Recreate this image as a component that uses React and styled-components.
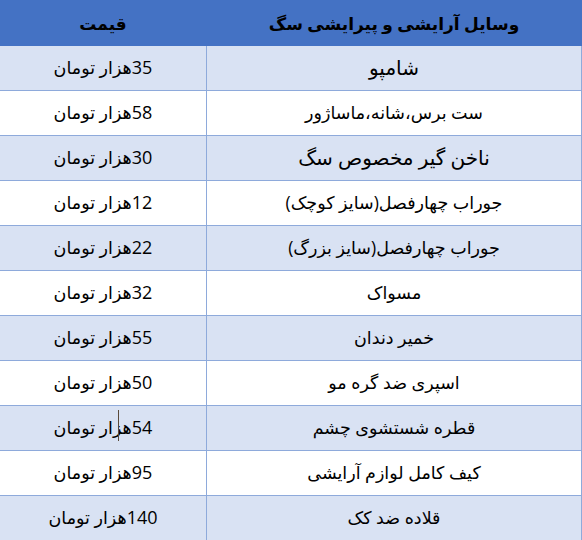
import styled, { createGlobalStyle } from "styled-components";

const items = [
  { name: "شامپو", price: "35", large: true },
  { name: "ست برس،شانه،ماساژور", price: "58" },
  { name: "ناخن گیر مخصوص سگ", price: "30", large: true },
  { name: "جوراب چهارفصل(سایز کوچک)", price: "12" },
  { name: "جوراب چهارفصل(سایز بزرگ)", price: "22" },
  { name: "مسواک", price: "32" },
  { name: "خمیر دندان", price: "55" },
  { name: "اسپری ضد گره مو", price: "50" },
  { name: "قطره شستشوی چشم", price: "54", caret: true },
  { name: "کیف کامل لوازم آرایشی", price: "95" },
  { name: "قلاده ضد کک", price: "140" },
];

const GlobalStyle = createGlobalStyle`
  body {
    margin: 0;
    background: #ffffff;
    font-family: "Open Sans", "DejaVu Sans", sans-serif;
  }
`;

const Table = styled.div`
  direction: rtl;
  width: 582px;
  display: grid;
  grid-template-columns: 376px 206px;
  color: #000000;
`;

const HeadCell = styled.div`
  height: 46px;
  background: #4472c4;
  display: flex;
  align-items: center;
  justify-content: center;
  font-weight: bold;
  font-size: 17px;
`;

const Cell = styled.div`
  position: relative;
  height: 44px;
  display: flex;
  align-items: center;
  justify-content: center;
  background: ${({ $shaded }) => ($shaded ? "#d9e2f3" : "#ffffff")};
  border-bottom: 1px solid #8eaadb;
  border-right: ${({ $edge }) => ($edge ? "1px solid #8eaadb" : "none")};
  border-left: ${({ $edge }) => ($edge ? "1px solid #8eaadb" : "none")};
  font-size: 17.5px;
`;

const Name = styled.span`
  font-size: ${({ $large }) => ($large ? "20px" : "17.5px")};
  margin-bottom: 2px;
`;

const Price = styled.span`
  margin-bottom: 2px;
`;

const Num = styled.span`
  font-family: "Open Sans", sans-serif;
  font-size: 18px;
`;

const Caret = styled.span`
  position: absolute;
  left: 118px;
  top: 4px;
  width: 1px;
  height: 31px;
  background: #5a4a3a;
`;

export default function App() {
  return (
    <>
      <GlobalStyle />
      <Table>
        <HeadCell>وسایل آرایشی و پیرایشی سگ</HeadCell>
        <HeadCell>قیمت</HeadCell>
        {items.map((it, i) => [
          <Cell key={`n${i}`} $shaded={i % 2 === 0} $edge>
            <Name $large={it.large}>{it.name}</Name>
          </Cell>,
          <Cell key={`p${i}`} $shaded={i % 2 === 0}>
            <Price>
              <Num>{it.price}</Num>هزار تومان
            </Price>
            {it.caret && <Caret />}
          </Cell>,
        ])}
      </Table>
    </>
  );
}
